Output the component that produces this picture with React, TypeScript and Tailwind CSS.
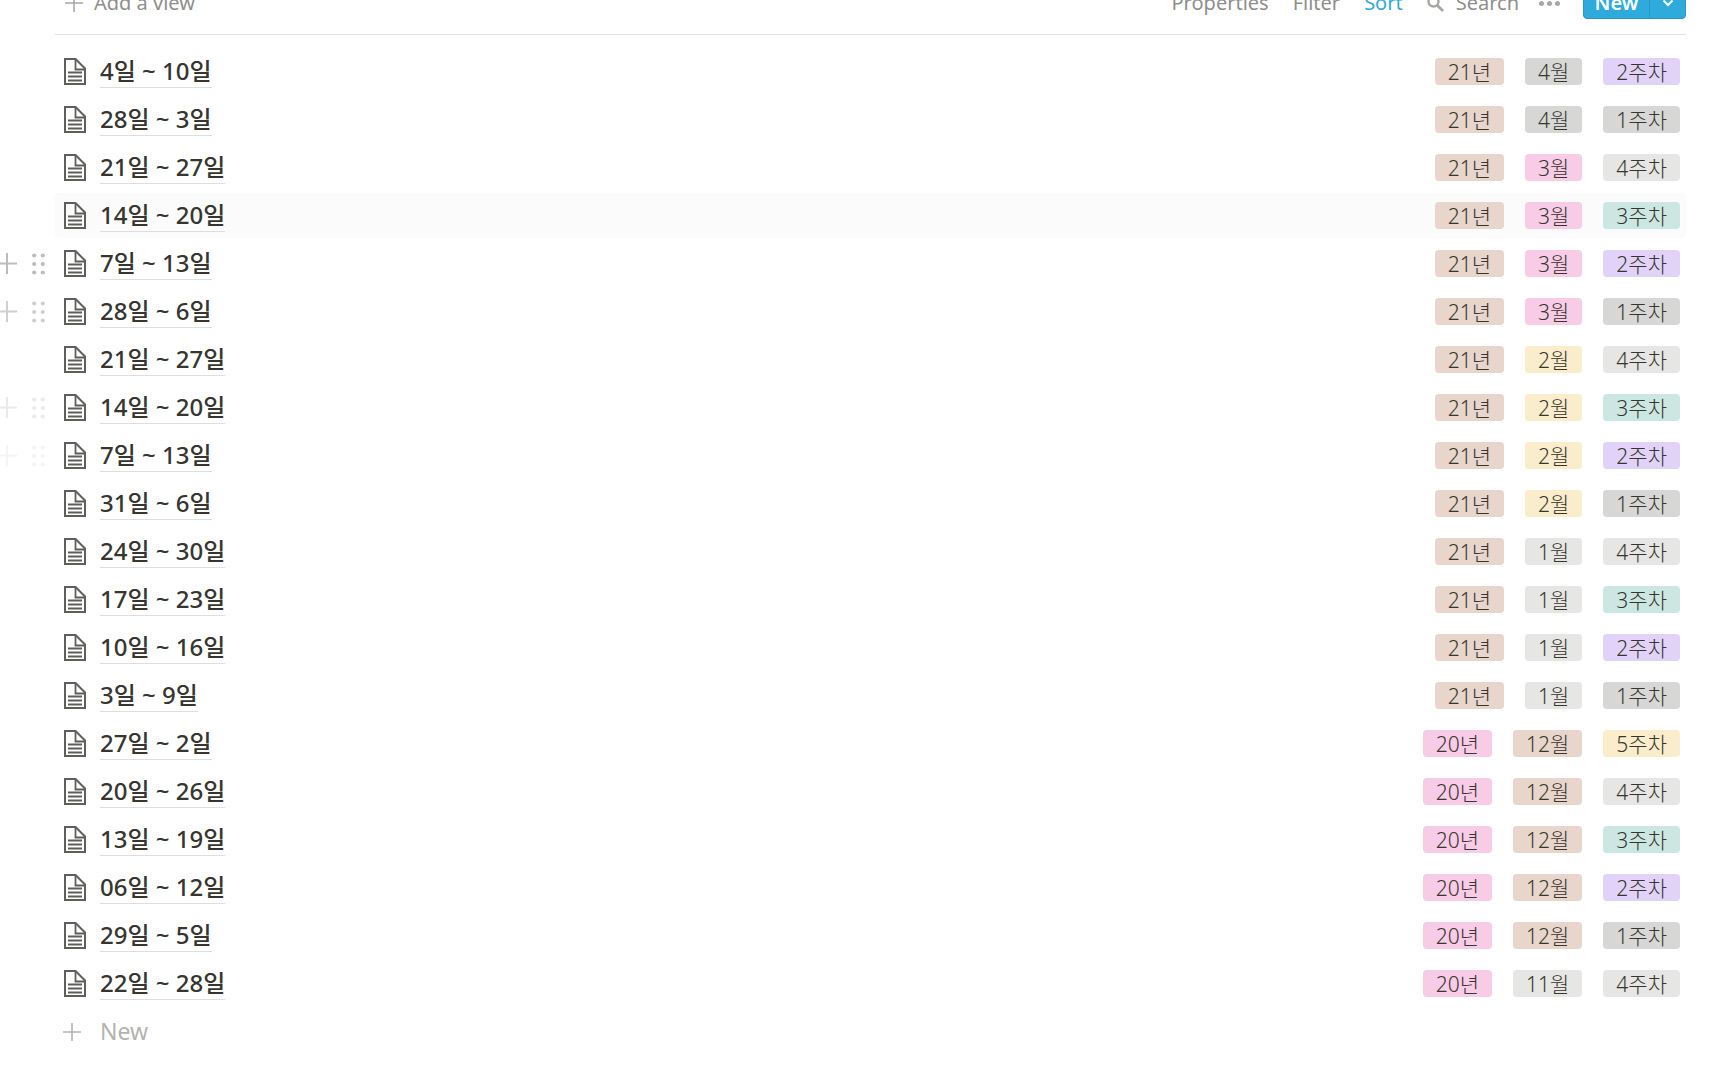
type TagColor = "brown" | "gray" | "default" | "pink" | "yellow" | "green" | "purple";

type Tag = { label: string; color: TagColor };

type Page = {
  title: string;
  year: Tag;
  month: Tag;
  week: Tag;
};

const tagColors: Record<TagColor, string> = {
  brown: "bg-[#e8d5cc]",
  gray: "bg-[#d7d7d5]",
  default: "bg-[#e6e6e4]",
  pink: "bg-[#f8cce6]",
  yellow: "bg-[#faedcc]",
  green: "bg-[#cce7e1]",
  purple: "bg-[#e1d3f8]",
};

const y21: Tag = { label: "21년", color: "brown" };
const y20: Tag = { label: "20년", color: "pink" };

const apr: Tag = { label: "4월", color: "gray" };
const mar: Tag = { label: "3월", color: "pink" };
const feb: Tag = { label: "2월", color: "yellow" };
const jan: Tag = { label: "1월", color: "default" };
const dec: Tag = { label: "12월", color: "brown" };
const nov: Tag = { label: "11월", color: "default" };

const w1: Tag = { label: "1주차", color: "gray" };
const w2: Tag = { label: "2주차", color: "purple" };
const w3: Tag = { label: "3주차", color: "green" };
const w4: Tag = { label: "4주차", color: "default" };
const w5: Tag = { label: "5주차", color: "yellow" };

const pages: Page[] = [
  { title: "4일 ~ 10일", year: y21, month: apr, week: w2 },
  { title: "28일 ~ 3일", year: y21, month: apr, week: w1 },
  { title: "21일 ~ 27일", year: y21, month: mar, week: w4 },
  { title: "14일 ~ 20일", year: y21, month: mar, week: w3 },
  { title: "7일 ~ 13일", year: y21, month: mar, week: w2 },
  { title: "28일 ~ 6일", year: y21, month: mar, week: w1 },
  { title: "21일 ~ 27일", year: y21, month: feb, week: w4 },
  { title: "14일 ~ 20일", year: y21, month: feb, week: w3 },
  { title: "7일 ~ 13일", year: y21, month: feb, week: w2 },
  { title: "31일 ~ 6일", year: y21, month: feb, week: w1 },
  { title: "24일 ~ 30일", year: y21, month: jan, week: w4 },
  { title: "17일 ~ 23일", year: y21, month: jan, week: w3 },
  { title: "10일 ~ 16일", year: y21, month: jan, week: w2 },
  { title: "3일 ~ 9일", year: y21, month: jan, week: w1 },
  { title: "27일 ~ 2일", year: y20, month: dec, week: w5 },
  { title: "20일 ~ 26일", year: y20, month: dec, week: w4 },
  { title: "13일 ~ 19일", year: y20, month: dec, week: w3 },
  { title: "06일 ~ 12일", year: y20, month: dec, week: w2 },
  { title: "29일 ~ 5일", year: y20, month: dec, week: w1 },
  { title: "22일 ~ 28일", year: y20, month: nov, week: w4 },
];

const handleOpacity: Record<number, string> = {
  4: "opacity-100",
  5: "opacity-70",
  7: "opacity-30",
  8: "opacity-15",
};

const hoveredRow = 3;

function PlusIcon({ className }: { className?: string }) {
  return (
    <svg viewBox="0 0 18 18" className={`w-[18px] h-[18px] shrink-0 ${className ?? ""}`} aria-hidden="true">
      <path d="M9 0v18M0 9h18" stroke="currentColor" strokeWidth="1.6" fill="none" />
    </svg>
  );
}

function PageIcon() {
  return (
    <svg viewBox="0 0 22 27" className="w-[22px] h-[27px] shrink-0 text-[#5f5e5b]" aria-hidden="true">
      <path d="M1 1h10.5L21 10.5V26H1z" stroke="currentColor" strokeWidth="2" fill="none" />
      <path d="M11.5 1v10.500H21" stroke="currentColor" strokeWidth="1.8" fill="none" />
      <path d="M4 14.500h14M4 18.500h14M4 22.500h14" stroke="currentColor" strokeWidth="1.9" fill="none" />
    </svg>
  );
}

function RowHandle({ opacity }: { opacity: string }) {
  return (
    <div className={`flex items-center justify-between w-[45px] h-full text-[#bdbcba] ${opacity}`}>
      <button type="button" aria-label="Add row below">
        <svg viewBox="0 0 17 21" className="w-[17px] h-[21px]" aria-hidden="true">
          <path d="M7 0v21M0 10.5h17" stroke="currentColor" strokeWidth="2" fill="none" />
        </svg>
      </button>
      <button type="button" aria-label="Drag row">
        <svg viewBox="0 0 13 22" className="w-[13px] h-[22px]" fill="currentColor" aria-hidden="true">
          <circle cx="2.2" cy="2.5" r="2.1" />
          <circle cx="10.8" cy="2.5" r="2.1" />
          <circle cx="2.2" cy="11" r="2.1" />
          <circle cx="10.8" cy="11" r="2.1" />
          <circle cx="2.2" cy="19.5" r="2.1" />
          <circle cx="10.8" cy="19.5" r="2.1" />
        </svg>
      </button>
    </div>
  );
}

function TagPill({ tag }: { tag: Tag }) {
  return (
    <span
      className={`h-[27px] px-[13px] rounded flex items-center justify-center text-[21px] leading-7 font-light whitespace-nowrap ${tagColors[tag.color]}`}
    >
      {tag.label}
    </span>
  );
}

function Toolbar() {
  return (
    <div className="ml-[55px] mr-[43px] -mt-7 h-[63px] flex items-center justify-between border-b border-[#e0e0de] text-[20px] text-[#8f8e8b]">
      <button type="button" className="flex items-center gap-[11px] pl-[10px]">
        <PlusIcon className="text-[#a9a8a5]" />
        Add a view
      </button>
      <div className="flex items-center">
        <button type="button" className="mr-6">Properties</button>
        <button type="button" className="mr-6">Filter</button>
        <button type="button" className="mr-6 text-[#2eaadc]">Sort</button>
        <button type="button" className="flex items-center gap-3 mr-5">
          <svg viewBox="0 0 17 17" className="w-[17px] h-[17px] text-[#a9a8a5]" aria-hidden="true">
            <circle cx="6.5" cy="6.5" r="5" stroke="currentColor" strokeWidth="2.4" fill="none" />
            <path d="M10.5 10.5l5.500 5.500" stroke="currentColor" strokeWidth="2.8" fill="none" />
          </svg>
          Search
        </button>
        <button type="button" aria-label="More" className="mr-[23px]">
          <svg viewBox="0 0 21 5" className="w-[21px] h-[5px] text-[#a9a8a5]" fill="currentColor" aria-hidden="true">
            <circle cx="2.5" cy="2.5" r="2.5" />
            <circle cx="10.5" cy="2.5" r="2.5" />
            <circle cx="18.5" cy="2.5" r="2.5" />
          </svg>
        </button>
        <div className="flex h-8 rounded-[4px] overflow-hidden bg-[#2eaadc] border border-[#2898c5] text-white">
          <button type="button" className="w-[66px] font-semibold border-r border-[#2898c5]">
            New
          </button>
          <button type="button" aria-label="New from template" className="w-[35px] flex items-center justify-center">
            <svg viewBox="0 0 12 8" className="w-3 h-2" aria-hidden="true">
              <path d="M1.5 1.5L6 6l4.500-4.500" stroke="currentColor" strokeWidth="2" fill="none" />
            </svg>
          </button>
        </div>
      </div>
    </div>
  );
}

export default function App() {
  return (
    <div className="min-h-screen overflow-hidden bg-white text-[#37352f] font-['Noto_Sans','Noto_Sans_CJK_KR',sans-serif]">
      <Toolbar />
      <ul className="mt-[14px] flex flex-col gap-[3px]">
        {pages.map((page, i) => (
          <li key={i} className="flex h-[45px] pr-[43px]">
            <div className="w-[55px] shrink-0">
              {handleOpacity[i] && <RowHandle opacity={handleOpacity[i]} />}
            </div>
            <a
              href="#"
              className={`flex-1 flex items-center rounded pl-[9px] pr-[6px] ${i === hoveredRow ? "bg-[#fbfbfb]" : ""}`}
            >
              <PageIcon />
              <span className="ml-[14px] text-[24px] leading-8 font-medium border-b border-[#dededc] whitespace-nowrap">
                {page.title}
              </span>
              <span className="ml-auto flex gap-[21px]">
                <TagPill tag={page.year} />
                <TagPill tag={page.month} />
                <TagPill tag={page.week} />
              </span>
            </a>
          </li>
        ))}
      </ul>
      <button type="button" className="mt-[3px] ml-[55px] h-[45px] flex items-center pl-2 text-[23px] text-[#b4b3b0]">
        <PlusIcon className="mr-[19px]" />
        New
      </button>
    </div>
  );
}
